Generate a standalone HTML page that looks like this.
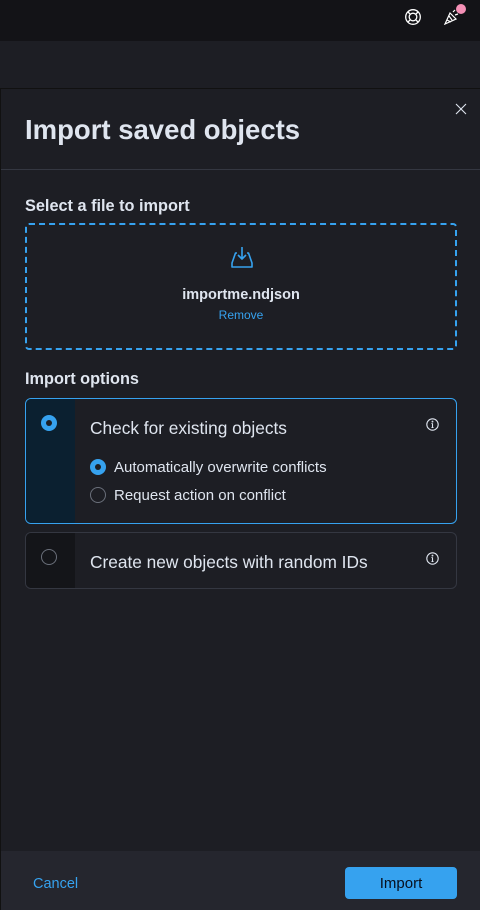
<!DOCTYPE html>
<html><head><meta charset="utf-8"><style>
*{box-sizing:border-box;margin:0;padding:0}
body{width:480px;height:910px;background:#1d1e24;font-family:"Liberation Sans",sans-serif;color:#dfe5ef;position:relative;overflow:hidden}
.top{position:absolute;left:0;top:0;width:480px;height:41px;background:#131317}
.fly{position:absolute;left:0;top:88px;width:480px;height:822px;background:#1d1e24;border-top:1px solid #111;border-left:1px solid #111}
h1{position:absolute;left:25px;top:114px;font-size:27.5px;font-weight:bold;color:#dfe5ef}
.sep{position:absolute;left:1px;right:0;top:169px;height:1px;background:#343741}
.lbl{position:absolute;left:25px;font-size:16.3px;font-weight:bold;color:#dfe5ef}
.drop{position:absolute;left:25px;top:223px;width:432px;height:127px;border:2px dashed #36a2ef;border-radius:4px}
.card{position:absolute;left:25px;width:432px;border-radius:6px;overflow:hidden}
.side{position:absolute;left:0;top:0;bottom:0;width:49px}
.t{position:absolute;font-size:17.3px;color:#dfe5ef}
.s{position:absolute;font-size:15px;color:#dfe5ef}
.foot{position:absolute;left:1px;top:851px;width:479px;height:59px;background:#25262e}
.btn{position:absolute;left:345px;top:867px;width:112px;height:32px;background:#36a2ef;border-radius:4px;color:#07101f;font-size:15px;text-align:center;line-height:34px}
</style></head><body>
<div class="top">
<svg style="position:absolute;left:404px;top:8px" width="18" height="18" viewBox="0 0 18 18" fill="none" stroke="#fff" stroke-width="1.3"><circle cx="9" cy="9" r="7.3"/><circle cx="9" cy="9" r="3.8"/><path d="M4 4l2.5 2.5M14 4l-2.5 2.5M4 14l2.5-2.5M14 14l-2.5-2.5"/></svg>
<svg style="position:absolute;left:443px;top:9px" width="16" height="16" viewBox="0 0 16 16" fill="none" stroke="#fff" stroke-width="1.2"><path d="M2 15L7 4l6 6z M4 11l4 2 M6 7l3 4"/><path d="M10 3l2-2M12 6l3-1"/></svg>
<div style="position:absolute;left:456px;top:4px;width:10px;height:10px;border-radius:50%;background:#f490b6"></div>
</div>
<div class="fly"></div>
<svg style="position:absolute;left:455px;top:103px" width="12" height="12" viewBox="0 0 12 12" stroke="#dfe5ef" stroke-width="1.1"><path d="M1 1l10 10M11 1L1 11"/></svg>
<h1>Import saved objects</h1>
<div class="sep"></div>
<div class="lbl" style="top:197px">Select a file to import</div>
<div class="drop">
<svg style="position:absolute;left:202px;top:20px" width="26" height="26" viewBox="0 0 26 26" fill="none" stroke="#36a2ef" stroke-width="1.6" stroke-linejoin="round"><path d="M13 2v12M9 10l4 4 4-4"/><path d="M8 8H6.5L3 18v4h20v-4L19.5 8H18"/></svg>
<div style="position:absolute;left:0;right:0;top:62px;text-align:center;font-size:14.5px;font-weight:bold;color:#dfe5ef">importme.ndjson</div>
<div style="position:absolute;left:0;right:0;top:83px;text-align:center;font-size:12px;color:#36a2ef">Remove</div>
</div>
<div class="lbl" style="top:370px">Import options</div>
<div class="card" style="top:398px;height:126px;border:1px solid #36a2ef;background:#1d1e24">
<div class="side" style="background:#0b2030"></div>
<div style="position:absolute;left:15px;top:16px;width:16px;height:16px;border-radius:50%;background:#36a2ef"><div style="position:absolute;left:5px;top:5px;width:6px;height:6px;border-radius:50%;background:#1d1e24"></div></div>
<div class="t" style="left:64px;top:19px">Check for existing objects</div>
<svg style="position:absolute;left:400px;top:19px" width="13" height="13" viewBox="0 0 13 13" fill="none" stroke="#dfe5ef" stroke-width="1.1"><circle cx="6.5" cy="6.5" r="5.7"/><path d="M6.5 5.5v4M5.5 9.5h2M5.5 5.5h1"/><circle cx="6.5" cy="3.6" r=".4"/></svg>
<div style="position:absolute;left:64px;top:60px;width:16px;height:16px;border-radius:50%;background:#36a2ef"><div style="position:absolute;left:5px;top:5px;width:6px;height:6px;border-radius:50%;background:#1d1e24"></div></div>
<div class="s" style="left:88px;top:60px">Automatically overwrite conflicts</div>
<div style="position:absolute;left:64px;top:88px;width:16px;height:16px;border-radius:50%;border:1px solid #6a6f7a"></div>
<div class="s" style="left:88px;top:88px">Request action on conflict</div>
</div>
<div class="card" style="top:532px;height:57px;border:1px solid #343741;background:#1d1e24">
<div class="side" style="background:#141519"></div>
<div style="position:absolute;left:15px;top:16px;width:16px;height:16px;border-radius:50%;border:1px solid #6a6f7a"></div>
<div class="t" style="left:64px;top:19px">Create new objects with random IDs</div>
<svg style="position:absolute;left:400px;top:19px" width="13" height="13" viewBox="0 0 13 13" fill="none" stroke="#dfe5ef" stroke-width="1.1"><circle cx="6.5" cy="6.5" r="5.7"/><path d="M6.5 5.5v4M5.5 9.5h2M5.5 5.5h1"/><circle cx="6.5" cy="3.6" r=".4"/></svg>
</div>
<div class="foot"></div>
<div style="position:absolute;left:33px;top:876px;font-size:14.5px;color:#36a2ef">Cancel</div>
<div class="btn">Import</div>
</body></html>
